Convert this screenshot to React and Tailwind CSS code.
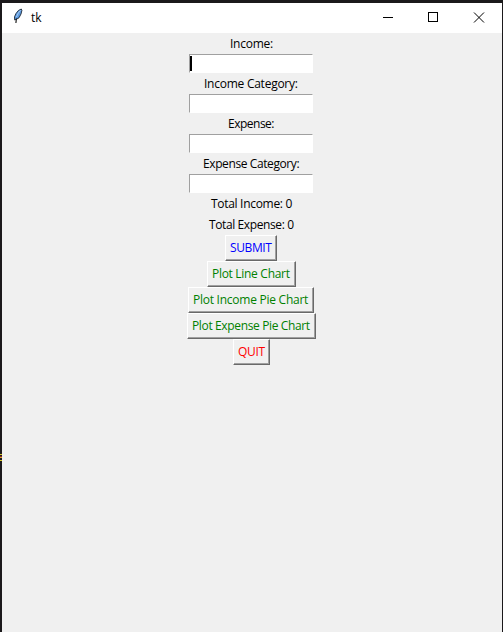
const text = "block whitespace-nowrap font-['Open_Sans','Noto_Sans',sans-serif] text-[12px] leading-[20px]";

function Label({ className, children }) {
  return (
    <div className="h-[21px] pt-px">
      <span className={`${text} text-black ${className}`}>{children}</span>
    </div>
  );
}

function Entry({ focused }) {
  return (
    <div className="ml-[2px] h-[19px] w-[124px] border border-t-[#a0a0a0] border-l-[#a0a0a0] border-r-white border-b-white bg-white pt-px">
      {focused && <div className="h-[15px] w-[2px] bg-black" />}
    </div>
  );
}

function Button({ className, textClass, children }) {
  return (
    <button
      className={`block h-[26px] border border-t-white border-l-white border-r-[#696969] border-b-[#696969] bg-[#f0f0f0] text-left ${className}`}
    >
      <span className="block h-[24px] border-r border-b border-[#a0a0a0] pt-[2px] pl-1">
        <span className={`${text} ${textClass}`}>{children}</span>
      </span>
    </button>
  );
}

function Feather() {
  return (
    <svg className="ml-[11px] h-4 w-3" viewBox="0 0 12 16">
      <path d="M8.300 1 5.400 2.500 3 5.500 1.500 8.800 1.700 12 3.300 11.300 6 9.800 8 6 8.900 2.400Z" fill="#5c9ae0" stroke="#1c2733" strokeWidth=".9" />
      <path d="M7.500 2.200 5.300 5 3.400 9" fill="none" stroke="#a4caf2" strokeWidth="1" />
      <path d="M3.400 10.500 2.900 15" fill="none" stroke="#111" strokeWidth="1.100" />
    </svg>
  );
}

export default function App() {
  return (
    <div className="flex h-[632px] w-[503px] overflow-hidden bg-[#1b191b] pt-[3px] pr-px">
      <div className="flex w-[2px] flex-col pt-[451px]">
        <div className="h-px bg-[#d6c52c]" />
        <div className="mt-px h-px bg-[#8c2430]" />
        <div className="h-px bg-[#d6a52c]" />
        <div className="mt-[2px] h-px bg-[#d6c52c]" />
      </div>
      <div className="flex flex-1 flex-col bg-[#f0f0f0]">
        <div className="flex h-[30px] items-start bg-white">
          <div className="flex h-[30px] flex-1 items-start pt-[5px]">
            <Feather />
            <span className={`${text} ml-[6px] text-black`}>tk</span>
          </div>
          <svg className="h-[30px] w-[140px]" viewBox="0 0 140 30" fill="none" stroke="#000" shapeRendering="crispEdges">
            <path d="M21 14.5H31" />
            <path d="M66.500 9.500H75.500V18.500H66.500Z" />
            <path d="M112 9.500 122 19.500M122 9.500 112 19.500" shapeRendering="auto" />
          </svg>
        </div>
        <div className="ml-[185px] flex w-[130px] flex-col items-start">
          <Label className="ml-[43px] tracking-[-0.25px]">Income:</Label>
          <Entry focused />
          <Label className="ml-[17px] tracking-[-0.25px]">Income Category:</Label>
          <Entry />
          <Label className="ml-[41px] tracking-[-0.5px]">Expense:</Label>
          <Entry />
          <Label className="ml-[16px] tracking-[-0.4px]">Expense Category:</Label>
          <Entry />
          <Label className="ml-[24px] tracking-[-0.3px]">Total Income: 0</Label>
          <Label className="ml-[22px] tracking-[-0.39px]">Total Expense: 0</Label>
          <Button className="ml-[38px] w-[52px]" textClass="text-[#0000ff] tracking-[-0.4px]">SUBMIT</Button>
          <Button className="ml-[20px] w-[89px]" textClass="text-[#008000] tracking-[-0.3px]">Plot Line Chart</Button>
          <Button className="ml-[1px] w-[126px]" textClass="text-[#008000] tracking-[-0.25px]">Plot Income Pie Chart</Button>
          <Button className="w-[129px]" textClass="text-[#008000] tracking-[-0.36px]">Plot Expense Pie Chart</Button>
          <Button className="ml-[46px] w-[37px]" textClass="text-[#ff0000] tracking-[-0.3px]">QUIT</Button>
        </div>
      </div>
    </div>
  );
}
